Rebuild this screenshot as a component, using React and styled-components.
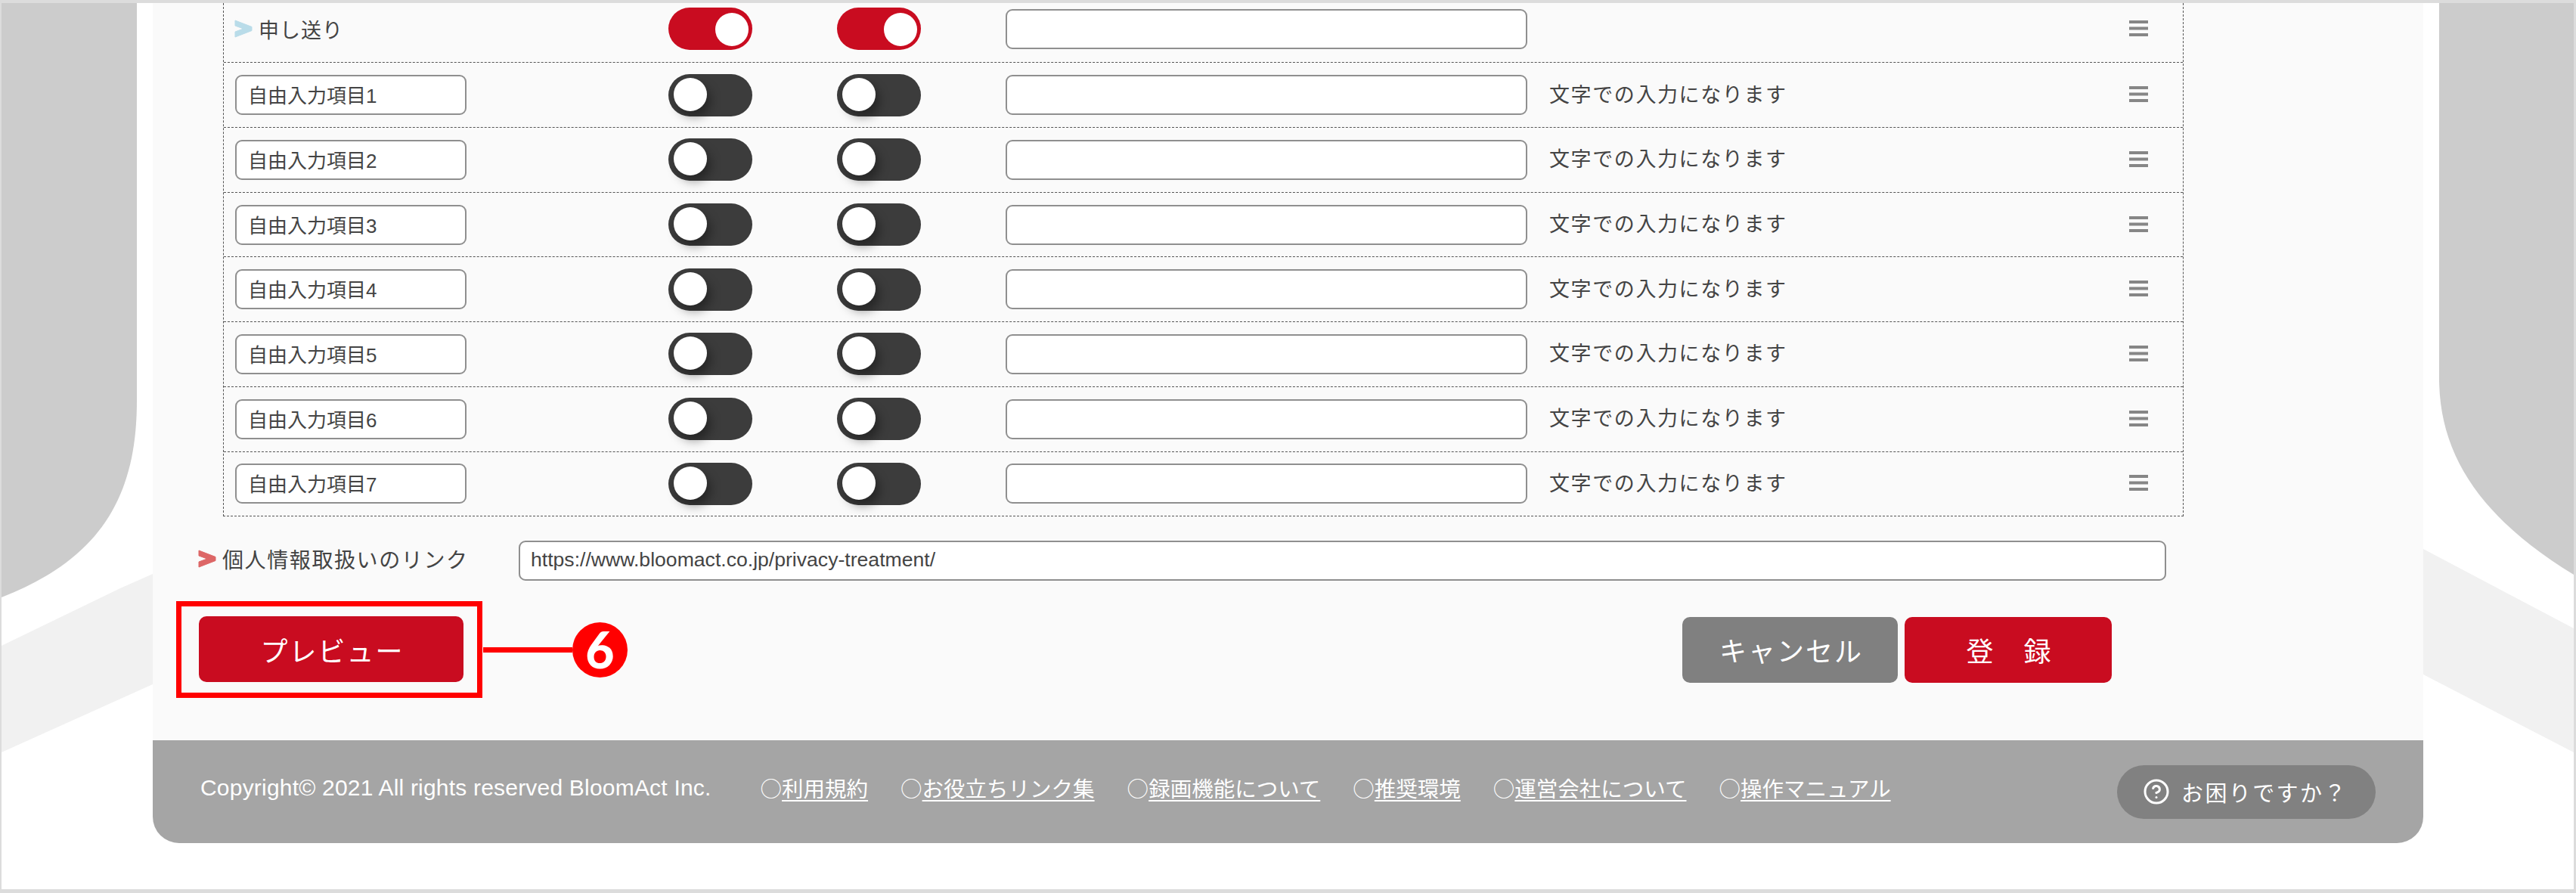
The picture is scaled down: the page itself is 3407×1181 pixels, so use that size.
import React from "react";
import styled, { createGlobalStyle } from "styled-components";
import { CircleHelp } from "lucide-react";

const Global = createGlobalStyle`
  html, body { margin: 0; padding: 0; background: #fff; }
  body { font-family: "Liberation Sans", "Noto Sans CJK JP", sans-serif; color: #444; }
`;

const Page = styled.div`
  position: relative;
  box-sizing: border-box;
  width: 3407px;
  height: 1181px;
  overflow: hidden;
  background: #fff;
  border-style: solid;
  border-color: #dcdcdc;
  border-width: 4px 3px 5px 2px;
`;

const Backdrop = styled.svg`
  position: absolute;
  left: -2px;
  top: -4px;
`;

const Panel = styled.main`
  position: relative;
  margin-left: 200px;
  width: 3003px;
  background: #fafafa;
  border-radius: 0 0 35px 35px;
`;

const Table = styled.div`
  margin-left: 93px;
  width: 2593px;
  box-sizing: border-box;
  border-left: 1px dashed #555;
  border-right: 1px dashed #555;
  border-bottom: 1px dashed #555;
`;

const Row = styled.div`
  box-sizing: border-box;
  display: grid;
  grid-template-columns: 573px 223px 223px 719px 767px 25px;
  align-items: center;
  height: ${(p) => (p.$cut ? "78.3px" : "85.71px")};
  padding: 0 0 ${(p) => (p.$cut ? "10px" : "0")} 15px;
  border-top: ${(p) => (p.$cut ? "0" : "1px dashed #555")};
`;

const Label = styled.div`
  display: flex;
  align-items: center;
  gap: 8px;
  margin-left: -1px;
  font-size: 27px;
  letter-spacing: 1px;
  color: #444;
`;

const Chevron = styled.svg`
  flex: none;
  display: block;
`;

const Field = styled.div`
  box-sizing: border-box;
  display: flex;
  align-items: center;
  width: ${(p) => p.$w}px;
  height: 53px;
  padding: 0 0 2px 15px;
  background: #fff;
  border: 2px solid #8f8f8f;
  border-radius: 9px;
  font-size: 26px;
  color: #444;
`;

const UrlField = styled(Field)`
  padding-left: 14px;
  font-size: 26.6px;
`;

const Toggle = styled.div`
  position: relative;
  width: 111px;
  height: 56px;
  border-radius: 28px;
  background: ${(p) => (p.$on ? "#c90c20" : "#3c3c3c")};
`;

const Knob = styled.span`
  position: absolute;
  top: ${(p) => (p.$on ? "7px" : "5px")};
  left: ${(p) => (p.$on ? "62px" : "7px")};
  width: 44px;
  height: 44px;
  border-radius: 50%;
  background: #fff;
  box-shadow: ${(p) => (p.$on ? "none" : "5px 8px 14px rgba(0,0,0,.38)")};
`;

const Note = styled.div`
  padding-bottom: 5px;
  font-size: 27px;
  letter-spacing: 1.6px;
  color: #444;
`;

const Grip = styled.svg`
  display: block;
  margin-top: -2px;
`;

const UrlRow = styled.div`
  display: flex;
  align-items: center;
  margin-top: 32px;
  padding-left: 60px;
`;

const UrlLabel = styled.div`
  display: flex;
  align-items: center;
  gap: 8px;
  width: 424px;
  padding-bottom: 6px;
  font-size: 28px;
  letter-spacing: 1.6px;
  color: #444;
`;

const Actions = styled.div`
  display: flex;
  align-items: center;
  margin-top: 27px;
  padding-left: 31px;
`;

const Highlight = styled.div`
  box-sizing: border-box;
  width: 405px;
  height: 128px;
  padding: 13px 17px 13px 23px;
  border: 7px solid #ff0000;
`;

const Button = styled.button`
  display: block;
  box-sizing: border-box;
  width: ${(p) => p.$w}px;
  height: 87px;
  padding: 0 0 0 3px;
  border: 0;
  border-radius: 10px;
  background: ${(p) => (p.$gray ? "#808080" : "#c90c20")};
  color: #fff;
  font-family: inherit;
  font-size: 36px;
  letter-spacing: 2px;
`;

const Connector = styled.div`
  width: 118px;
  height: 7px;
  margin-left: 1px;
  background: #ff0000;
`;

const Badge = styled.div`
  flex: none;
  display: flex;
  align-items: center;
  justify-content: center;
  width: 73px;
  height: 73px;
  border-radius: 50%;
  background: #ff0000;
  color: #fff;
  font-family: Lato, "Liberation Sans", sans-serif;
  font-size: 66px;
  font-weight: 900;
  line-height: 1;
`;

const ButtonGroup = styled.div`
  display: flex;
  gap: 9px;
  margin-left: auto;
  margin-right: 412px;
`;

const Footer = styled.footer`
  display: flex;
  align-items: center;
  height: 136px;
  margin-top: 56px;
  padding: 0 63px;
  background: #a5a5a5;
  border-radius: 0 0 35px 35px;
  color: #fff;
`;

const FooterLine = styled.div`
  display: flex;
  align-items: center;
  gap: 43px;
  padding-bottom: 12px;
`;

const Copyright = styled.span`
  margin: 2px 22px 0 0;
  font-size: 30px;
  letter-spacing: 0.2px;
`;

const LinkItem = styled.span`
  font-family: "Noto Sans CJK JP", sans-serif;
  font-size: 28.5px;
  white-space: nowrap;
`;

const FooterLink = styled.a`
  color: #fff;
  text-decoration: underline;
  text-decoration-thickness: 2px;
  text-underline-offset: 4px;
`;

const Help = styled.div`
  display: flex;
  align-items: center;
  gap: 15px;
  box-sizing: border-box;
  width: 342px;
  height: 71px;
  margin-left: auto;
  padding-left: 34px;
  border-radius: 36px;
  background: #818181;
  font-size: 29px;
  letter-spacing: 2.4px;
`;

const Arrow = ({ color }) => (
  <Chevron width="24" height="24" viewBox="0 0 24 24">
    <path d="M1 1 L23 9.5 V14.5 L1 23 V16 L12 12 L1 8 Z" fill={color} stroke={color} strokeWidth="1" strokeLinejoin="round" />
  </Chevron>
);

const Hamburger = () => (
  <Grip width="25" height="23" viewBox="0 0 25 23">
    <rect y="1" width="25" height="4" fill="#868686" />
    <rect y="9.5" width="25" height="4" fill="#868686" />
    <rect y="18" width="25" height="4" fill="#868686" />
  </Grip>
);

const Switch = ({ on }) => (
  <Toggle $on={on}>
    <Knob $on={on} />
  </Toggle>
);

const items = [1, 2, 3, 4, 5, 6, 7];
const links = ["利用規約", "お役立ちリンク集", "録画機能について", "推奨環境", "運営会社について", "操作マニュアル"];

export default function App() {
  return (
    <Page>
      <Global />
      <Backdrop width="3407" height="1181" viewBox="0 0 3407 1181">
        <path d="M2 4 H181 V530 C181 660 130 740 2 790 Z" fill="#cccccc" />
        <path d="M3404 4 H3226 V500 C3226 610 3290 690 3404 760 Z" fill="#cccccc" />
        <path d="M2 854 L159 778 L202 759 V905 L2 995 Z" fill="#f1f1f1" />
        <path d="M3205 726 L3404 831 V995 L3205 892 Z" fill="#f1f1f1" />
      </Backdrop>
      <Panel>
        <Table>
          <Row $cut>
            <Label>
              <Arrow color="#b9dce9" />
              申し送り
            </Label>
            <Switch on />
            <Switch on />
            <Field $w={690} />
            <span />
            <Hamburger />
          </Row>
          {items.map((n) => (
            <Row key={n}>
              <Field $w={306}>自由入力項目{n}</Field>
              <Switch />
              <Switch />
              <Field $w={690} />
              <Note>文字での入力になります</Note>
              <Hamburger />
            </Row>
          ))}
        </Table>
        <UrlRow>
          <UrlLabel>
            <Arrow color="#dd6666" />
            個人情報取扱いのリンク
          </UrlLabel>
          <UrlField $w={2179}>https://www.bloomact.co.jp/privacy-treatment/</UrlField>
        </UrlRow>
        <Actions>
          <Highlight>
            <Button $w={350}>プレビュー</Button>
          </Highlight>
          <Connector />
          <Badge>6</Badge>
          <ButtonGroup>
            <Button $w={285} $gray>キャンセル</Button>
            <Button $w={274}>登　録</Button>
          </ButtonGroup>
        </Actions>
        <Footer>
          <FooterLine>
            <Copyright>Copyright© 2021 All rights reserved BloomAct Inc.</Copyright>
            {links.map((l) => (
              <LinkItem key={l}>
                ○<FooterLink>{l}</FooterLink>
              </LinkItem>
            ))}
          </FooterLine>
          <Help>
            <CircleHelp size={36} strokeWidth={2} />
            お困りですか？
          </Help>
        </Footer>
      </Panel>
    </Page>
  );
}
